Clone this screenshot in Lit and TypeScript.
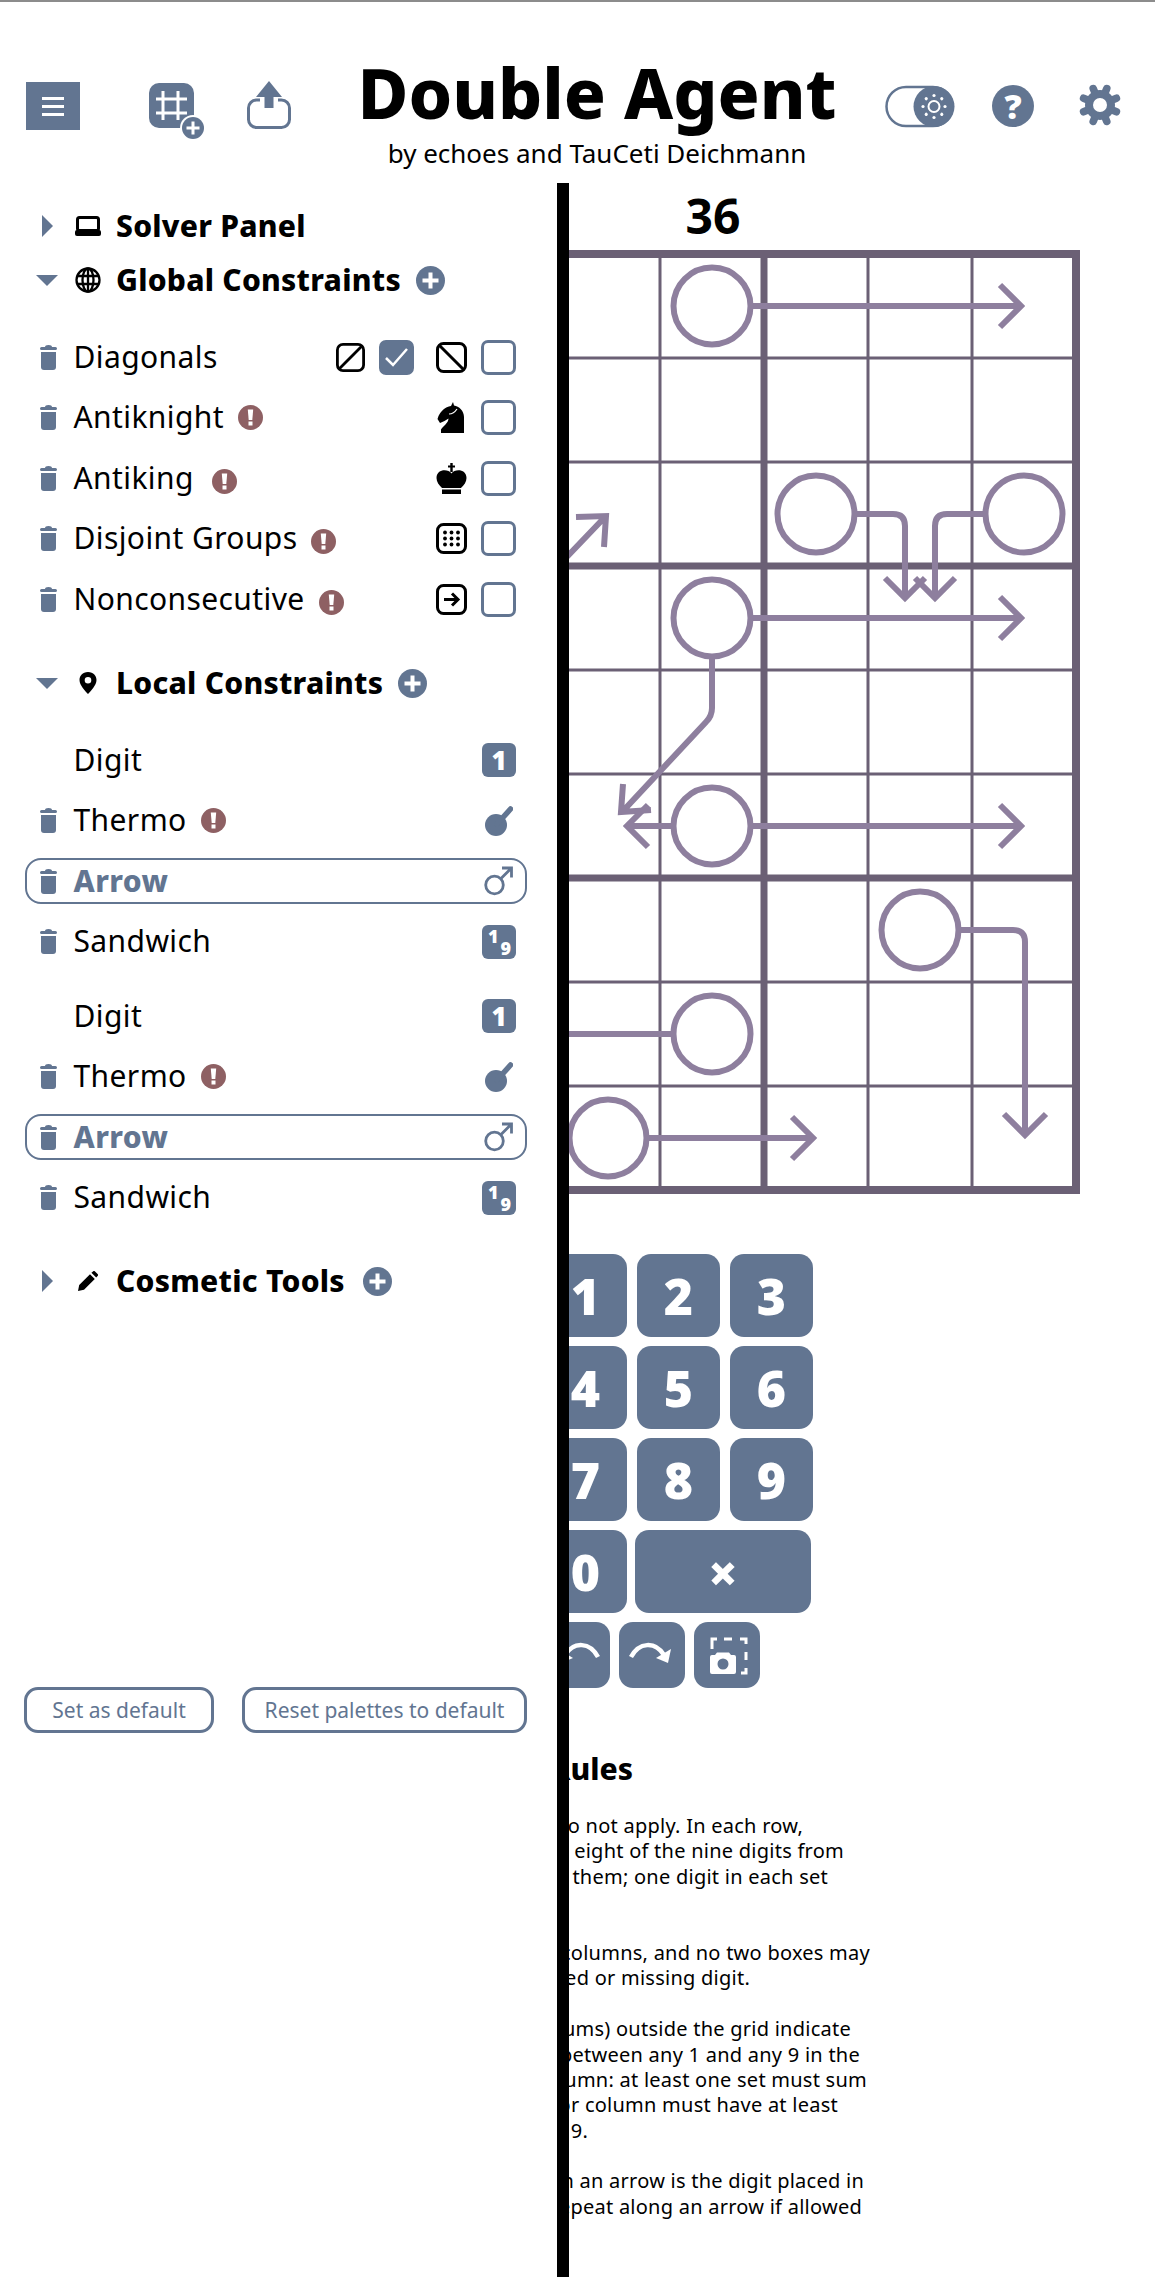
import { LitElement, html, css, svg } from 'lit';
import { customElement } from 'lit/decorators.js';

const BLUE = '#627591';
const INK = '#6b6075';
const ARROW = '#8e7f9e';

const cellX = (c: number) => 192 + 104 * c;
const cellY = (r: number) => 306 + 104 * r;

// circles and arrow shafts, in page coordinates
const circles = [
  [5, 0], [6, 2], [8, 2], [5, 3], [5, 5], [7, 6], [5, 7], [4, 8],
];
const shafts = [
  'M750 306H1021 M1000 285L1021 306L1000 327',
  'M854 514H893Q905 514 905 526V598 M885 578L905 598L925 578',
  'M986 514H947Q935 514 935 526V598 M915 578L935 598L955 578',
  'M750 618H1021 M1000 597L1021 618L1000 639',
  'M712 656V708Q712 716 706 722L623 811 M623 784L621 812L651 810',
  'M674 826H628 M648 805L627 826L648 847',
  'M750 826H1021 M1000 805L1021 826L1000 847',
  'M958 930H1013Q1025 930 1025 942V1135 M1004 1114L1025 1135L1046 1114',
  'M500 1034H674',
  'M646 1138H813 M792 1117L813 1138L792 1159',
  'M540 585L605 517 M576 517L606 516L604 547',
];

const trash = html`<svg class="trash" width="19" height="25" viewBox="0 0 19 25">
  <path d="M1 3.5a1.5 1.5 0 0 1 1.5-1.5H6a3.500 2 0 0 1 7 0h3.500a1.500 1.500 0 0 1 0 3h-14A1.500 1.500 0 0 1 1 3.500Z" fill=${BLUE} />
  <path d="M2 7h15v15a3 3 0 0 1-3 3H5a3 3 0 0 1-3-3Z" fill=${BLUE} />
</svg>`;

const warn = (extra = '') => html`<span class="warn ${extra}">
  <svg width="25" height="25" viewBox="0 0 25 25">
    <circle cx="12.500" cy="12.500" r="12.500" fill="#8e6063" />
    <path d="M9.800 4.500h5.400l-.9 10.500h-3.600Z" fill="#fff" />
    <rect x="10.500" y="16.500" width="4" height="4" fill="#fff" />
  </svg>
</span>`;

const box = (inner: unknown, w = 31, h = 31) => html`<svg width=${w} height=${h} viewBox="0 0 31 31">
  <rect x="1.500" y="1.500" width="28" height="28" rx="6" fill="none" stroke="#000" stroke-width="3" />
  ${inner}
</svg>`;

const icons = {
  slash: box(svg`<path d="M3 28L28 3" stroke="#000" stroke-width="3" />`, 29, 29),
  backslash: box(svg`<path d="M3 3L28 28" stroke="#000" stroke-width="3" />`),
  dots: box(svg`<g fill="#000">
    ${[9.500, 15.500, 21.500].flatMap((y) =>
      [9, 15.500, 22].map((x) => svg`<circle cx=${x} cy=${y} r="1.900" />`))}
  </g>`),
  next: box(svg`<path d="M8 15.500H22 M16 9.500L22 15.500L16 21.500" fill="none" stroke="#000" stroke-width="3" />`),
  knight: html`<svg width="31" height="31" viewBox="0 0 31 31">
    <path d="M17 0L15 4C9 5 5 9 2.500 14L1.500 17L4 21L8.500 19L12.500 16.500C12.500 21 7 24 5 27.500V31H28V15C28 9 23 4 18 3.500Z" fill="#000" />
    <path d="M13 12C17 12 19 10 21 7" fill="none" stroke="#fff" stroke-width="1.200" />
  </svg>`,
  king: html`<svg width="31" height="31" viewBox="0 0 31 31">
    <path d="M14.300 0h2.400v2.400h2.300v2.200h-2.300V9h-2.400V4.600h-2.300V2.400h2.300Z" fill="#000" />
    <path d="M15.500 10.500C12 5.500 .5 6 .5 15C.5 19 3 22 6 25H25C28 22 30.500 19 30.500 15C30.500 6 19 5.500 15.500 10.500Z" fill="#000" />
    <rect x="6" y="26.500" width="19" height="4.500" fill="#000" />
  </svg>`,
  thermo: html`<svg width="28" height="30" viewBox="0 0 28 30">
    <circle cx="11" cy="19" r="11" fill=${BLUE} />
    <path d="M12 18L25.500 3" stroke=${BLUE} stroke-width="5.500" stroke-linecap="round" />
  </svg>`,
  male: html`<svg width="29" height="30" viewBox="0 0 29 30">
    <circle cx="10.500" cy="19" r="8.800" fill="none" stroke=${BLUE} stroke-width="2.800" />
    <path d="M16.500 13L27 2.500 M18 2H27.500V11.500" fill="none" stroke=${BLUE} stroke-width="2.800" />
  </svg>`,
};

const laptop = html`<svg width="26" height="20" viewBox="0 0 26 20">
  <rect x="2.500" y="1.500" width="21" height="13" rx="2" fill="none" stroke="#000" stroke-width="3" />
  <rect x="0" y="14" width="26" height="6" rx="2" fill="#000" />
</svg>`;
const globe = html`<svg width="26" height="26" viewBox="0 0 26 26">
  <g fill="none" stroke="#000" stroke-width="2.300">
    <circle cx="13" cy="13" r="11.500" />
    <ellipse cx="13" cy="13" rx="5.500" ry="11.500" />
    <path d="M13 1.500V24.500 M2.500 9H23.500 M2.500 17H23.500" />
  </g>
</svg>`;
const pin = html`<svg width="20" height="22" viewBox="0 0 20 22">
  <path d="M10 0C4.500 0 1.500 4 1.500 8C1.500 13 7 19 10 22C13 19 18.500 13 18.500 8C18.500 4 15.500 0 10 0Z M10 5a3.300 3.300 0 1 1 0 6.600a3.300 3.300 0 0 1 0-6.600Z" fill="#000" fill-rule="evenodd" />
</svg>`;
const pencil = html`<svg width="20" height="20" viewBox="0 0 20 20">
  <path d="M0 20L1.200 14L12 3.200L16.800 8L6 18.800Z M13.400 1.800L15 .4a1.400 1.400 0 0 1 2 0L19.600 3a1.400 1.400 0 0 1 0 2L18.200 6.600Z" fill="#000" />
</svg>`;

const plus = html`<svg class="plus" width="29" height="29" viewBox="0 0 29 29">
  <circle cx="14.500" cy="14.500" r="14.500" fill=${BLUE} />
  <path d="M14.500 6.500V22.500 M6.500 14.500H22.500" stroke="#fff" stroke-width="4" />
</svg>`;

const triRight = html`<svg width="11" height="22" viewBox="0 0 11 22"><path d="M0 0L11 11L0 22Z" fill=${BLUE} /></svg>`;
const triDown = html`<svg width="22" height="11" viewBox="0 0 22 11"><path d="M0 0H22L11 11Z" fill=${BLUE} /></svg>`;

const gear = html`<svg width="44" height="44" viewBox="0 0 44 44">
  ${[0, 45, 90, 135, 180, 225, 270, 315].map((a) => svg`<path d="M22 22V4.200" transform="rotate(${a + 22.500} 22 22)" stroke=${BLUE} stroke-width="7.500" stroke-linecap="round" />`)}
  <circle cx="22" cy="22" r="11" fill="none" stroke=${BLUE} stroke-width="8" />
  <circle cx="22" cy="22" r="7" fill="#fff" />
</svg>`;

const sunRays = [0, 45, 90, 135, 180, 225, 270, 315];

type Row = {
  name: string;
  trash?: boolean;
  warn?: string;
  active?: boolean;
  right: unknown;
};

const checkbox = (on = false) => html`<span class="check ${on ? 'on' : ''}">
  ${on ? html`<svg width="25" height="22" viewBox="0 0 25 22"><path d="M2 12L9 19L23 3" fill="none" stroke="#fff" stroke-width="2.500" /></svg>` : ''}
</span>`;

const globals: Row[] = [
  { name: 'Diagonals', trash: true, right: html`${icons.slash}<span class="gap14"></span>${checkbox(true)}<span class="gap22"></span>${icons.backslash}<span class="gap14"></span>${checkbox()}` },
  { name: 'Antiknight', trash: true, warn: 'plain', right: html`${icons.knight}<span class="gap14"></span>${checkbox()}` },
  { name: 'Antiking', trash: true, warn: 'low far', right: html`${icons.king}<span class="gap14"></span>${checkbox()}` },
  { name: 'Disjoint Groups', trash: true, warn: 'low', right: html`${icons.dots}<span class="gap14"></span>${checkbox()}` },
  { name: 'Nonconsecutive', trash: true, warn: 'low', right: html`${icons.next}<span class="gap14"></span>${checkbox()}` },
];

const locals: Row[] = [
  { name: 'Digit', right: html`<span class="tile">1</span>` },
  { name: 'Thermo', trash: true, warn: 'plain', right: html`<span class="slot">${icons.thermo}</span>` },
  { name: 'Arrow', trash: true, active: true, right: html`<span class="slot">${icons.male}</span>` },
  { name: 'Sandwich', trash: true, right: html`<span class="tile split"><i>1</i><b>9</b></span>` },
];

// [right edge of the line in page px, text]; the start of each line sits under the side panel
const rules: [number, string][] = [
  [803, 'Normal sudoku rules do not apply. In each row,'],
  [844, 'column and box, place eight of the nine digits from'],
  [828, '1 to 9 with no repeats among them; one digit in each set'],
  [420, 'is left out.'],
  [0, ''],
  [870, 'Rows may not match columns, and no two boxes may'],
  [750, 'share a repeated or missing digit.'],
  [0, ''],
  [851, 'Clues (sandwich sums) outside the grid indicate'],
  [860, 'the sum of digits between any 1 and any 9 in the'],
  [867, 'given row or column: at least one set must sum'],
  [838, 'to it, and that row or column must have at least'],
  [588, 'one 1 and one 9.'],
  [0, ''],
  [864, 'A circled digit on an arrow is the digit placed in'],
  [862, 'its cells. Digits may repeat along an arrow if allowed'],
];

@customElement('app-root')
export class AppRoot extends LitElement {
  static styles = css`
    :host {
      --blue: #627591;
      display: block;
      position: relative;
      width: 1155px;
      height: 2277px;
      overflow: hidden;
      background: #fff;
      color: #000;
      font-family: 'Noto Sans', 'Lato', sans-serif;
    }
    .topline { height: 2px; background: #8c8c8c; }

    header {
      display: flex;
      align-items: flex-start;
      height: 181px;
      padding: 79px 0 0 26px;
      box-sizing: border-box;
    }
    .menu {
      width: 54px;
      height: 48px;
      background: var(--blue);
      display: flex;
      flex-direction: column;
      align-items: center;
      justify-content: center;
      gap: 5px;
      margin-top: 1px;
    }
    .menu span { width: 22px; height: 3px; background: #fff; }
    .grid-add { margin-left: 69px; margin-top: 2px; }
    .share { margin-left: 42px; }
    .brand { width: 514px; margin-left: 49px; text-align: center; margin-top: -29px; }
    .brand h1 {
      margin: 0;
      font-size: 69.5px;
      line-height: 80px;
      font-weight: 800;
      white-space: nowrap;
    }
    .brand p {
      margin: 5px 0 0;
      font-size: 26px;
      line-height: 32px;
      white-space: nowrap;
    }
    .toggle { margin-left: 31px; margin-top: 4px; }
    .help {
      margin-left: 37px;
      margin-top: 4px;
      width: 42px;
      height: 42px;
      border-radius: 50%;
      background: var(--blue);
      color: #fff;
      font-size: 34px;
      font-weight: 900;
      line-height: 42px;
      text-align: center;
    }
    .cog { margin-left: 44px; margin-top: 2px; }

    .clue {
      width: 104px;
      margin-left: 661px;
      height: 67px;
      text-align: center;
      font-size: 48px;
      line-height: 66px;
      font-weight: 700;
    }
    .board { display: block; margin-left: 136px; }

    .pad {
      margin: 60px 0 0 544px;
      display: flex;
      flex-direction: column;
      gap: 9px;
    }
    .pad-row { display: flex; gap: 10px; }
    .key {
      width: 83px;
      height: 83px;
      border-radius: 14px;
      background: var(--blue);
      color: #fff;
      font-size: 50px;
      font-weight: 900;
      display: flex;
      align-items: center;
      justify-content: center;
    }
    .key.wide { width: 176px; margin-left: -2px; font-size: 52px; }
    .pad-row.tools { gap: 9px; }
    .key.tool { width: 66px; height: 66px; }

    .rules { margin-top: 61px; }
    .rules h2 {
      margin: 0 0 24px;
      width: 633px;
      text-align: right;
      font-size: 30px;
      line-height: 40px;
      font-weight: 800;
    }
    .line {
      height: 25.4px;
      line-height: 25.4px;
      font-size: 20px;
      letter-spacing: 0.25px;
      text-align: right;
      white-space: nowrap;
    }

    aside {
      position: absolute;
      top: 183px;
      left: 0;
      width: 557px;
      height: 2094px;
      background: #fff;
      border-right: 12px solid #000;
      padding-top: 16px;
    }
    .hdr {
      display: flex;
      align-items: center;
      height: 54px;
    }
    .tri { width: 30px; margin-left: 32px; display: flex; justify-content: center; }
    .ico { width: 26px; margin-left: 13px; margin-right: 15px; display: flex; justify-content: center; }
    .hdr h3 {
      margin: 0 0 2px;
      font-size: 30px;
      font-weight: 800;
      letter-spacing: 0.25px;
      white-space: nowrap;
    }
    .plus { margin-left: 15px; }
    .hdr.cosmetic .plus { margin-left: 18px; }
    .rows { display: flex; flex-direction: column; gap: 14.5px; margin: 0 0 0 25px; width: 502px; }
    .rows.first { margin-top: 27px; }
    .rows.second { margin-top: 28.5px; }
    .hdr.local { margin-top: 34px; }
    .hdr.cosmetic { margin-top: 33.5px; }
    .row {
      display: flex;
      align-items: center;
      height: 46px;
      box-sizing: border-box;
      border: 2px solid transparent;
      border-radius: 16px;
      padding: 0 9px 0 12px;
    }
    .row.active { border-color: var(--blue); color: var(--blue); }
    .row.active .name { font-weight: 800; }
    .trash-slot { width: 19px; margin-right: 15.5px; display: flex; }
    .name { font-size: 30px; letter-spacing: 0.4px; white-space: nowrap; margin-bottom: 2px; }
    .warn { display: flex; margin-left: 14px; }
    .warn.low { margin-top: 6px; }
    .warn.far { margin-left: 18px; }
    .opts { margin-left: auto; display: flex; align-items: center; }
    .gap14 { width: 14px; }
    .gap22 { width: 22px; }
    .check {
      width: 35px;
      height: 35px;
      box-sizing: border-box;
      border: 3px solid var(--blue);
      border-radius: 7px;
      display: flex;
      align-items: center;
      justify-content: center;
    }
    .check.on { background: var(--blue); }
    .tile {
      position: relative;
      width: 34px;
      height: 34px;
      border-radius: 6px;
      background: var(--blue);
      color: #fff;
      font-size: 26px;
      font-weight: 900;
      line-height: 34px;
      text-align: center;
    }
    .tile.split i, .tile.split b {
      position: absolute;
      font-style: normal;
      font-size: 18px;
      line-height: 18px;
      font-weight: 900;
    }
    .tile.split i { left: 6px; top: 2px; }
    .tile.split b { right: 5px; bottom: 2px; }
    .slot { display: flex; margin-right: 3px; }

    .actions {
      display: flex;
      gap: 28px;
      margin: 379px 0 0 24px;
    }
    .actions button {
      height: 46px;
      box-sizing: border-box;
      border: 3px solid var(--blue);
      border-radius: 14px;
      background: #fff;
      color: var(--blue);
      font: inherit;
      font-size: 21px;
      padding: 0;
    }
    .actions .set { width: 190px; }
    .actions .reset { width: 285px; }
  `;

  private renderRow(r: Row) {
    return html`<div class="row ${r.active ? 'active' : ''}">
      <span class="trash-slot">${r.trash ? trash : ''}</span>
      <span class="name">${r.name}</span>
      ${r.warn ? warn(r.warn) : ''}
      <span class="opts">${r.right}</span>
    </div>`;
  }

  private renderBoard() {
    const thin = [660, 868, 972, 556, 348, 244].map((x) => svg`<path d="M${x} 254V1190" stroke=${INK} stroke-width="3" />`);
    const thinH = [358, 462, 670, 774, 982, 1086].map((y) => svg`<path d="M140 ${y}H1076" stroke=${INK} stroke-width="3" />`);
    const thick = [452, 764].map((x) => svg`<path d="M${x} 254V1190" stroke=${INK} stroke-width="7" />`);
    const thickH = [566, 878].map((y) => svg`<path d="M140 ${y}H1076" stroke=${INK} stroke-width="7" />`);
    return html`<svg class="board" width="944" height="944" viewBox="136 250 944 944">
      ${thin}${thinH}${thick}${thickH}
      <rect x="140" y="254" width="936" height="936" fill="none" stroke=${INK} stroke-width="8" />
      <g fill="none" stroke=${ARROW} stroke-width="6" stroke-linejoin="miter">
        ${shafts.map((d) => svg`<path d=${d} />`)}
        ${circles.map(([c, r]) => svg`<circle cx=${cellX(c)} cy=${cellY(r)} r="38.500" />`)}
      </g>
    </svg>`;
  }

  render() {
    return html`
      <div class="topline"></div>
      <header>
        <div class="menu"><span></span><span></span><span></span></div>
        <svg class="grid-add" width="56" height="57" viewBox="0 0 56 57">
          <rect x="0" y="0" width="45" height="45" rx="10" fill=${BLUE} />
          <path d="M14 8V37 M29 8V37 M7 16H38 M7 30H38" stroke="#fff" stroke-width="3" />
          <circle cx="44" cy="45" r="13" fill="#fff" />
          <circle cx="44" cy="45" r="11" fill=${BLUE} />
          <path d="M44 38.500V51.500 M37.500 45H50.500" stroke="#fff" stroke-width="3" />
        </svg>
        <svg class="share" width="44" height="48" viewBox="0 0 44 48">
          <rect x="1.500" y="19" width="41" height="27.500" rx="8" fill="none" stroke=${BLUE} stroke-width="3" />
          <rect x="13" y="6" width="18" height="22" fill="#fff" />
          <path d="M22 0L35 16H26.500V27H17.500V16H9Z" fill=${BLUE} />
        </svg>
        <div class="brand">
          <h1>Double Agent</h1>
          <p>by echoes and TauCeti Deichmann</p>
        </div>
        <svg class="toggle" width="70" height="44" viewBox="0 0 70 44">
          <rect x="1.500" y="2" width="66" height="39" rx="19.500" fill="none" stroke=${BLUE} stroke-width="2.500" />
          <circle cx="49" cy="21.500" r="20.500" fill=${BLUE} />
          <circle cx="49" cy="21.500" r="5.500" fill="none" stroke="#fff" stroke-width="2" />
          ${sunRays.map((a) => svg`<circle cx="49" cy="10.500" r="1.600" fill="#fff" transform="rotate(${a} 49 21.500)" />`)}
        </svg>
        <div class="help">?</div>
        <span class="cog">${gear}</span>
      </header>

      <div class="clue">36</div>
      ${this.renderBoard()}

      <div class="pad">
        ${[['1', '2', '3'], ['4', '5', '6'], ['7', '8', '9']].map((row) => html`<div class="pad-row">
          ${row.map((k) => html`<div class="key">${k}</div>`)}
        </div>`)}
        <div class="pad-row"><div class="key">0</div><div class="key wide">×</div></div>
        <div class="pad-row tools">
          <div class="key tool">
            <svg width="66" height="66" viewBox="0 0 66 66"><path d="M54 35C46 20 30 19 21 33" fill="none" stroke="#fff" stroke-width="4.500" /><path d="M14 27L17 41L29 36Z" fill="#fff" /></svg>
          </div>
          <div class="key tool">
            <svg width="66" height="66" viewBox="0 0 66 66"><path d="M12 35C20 20 36 19 45 33" fill="none" stroke="#fff" stroke-width="4.500" /><path d="M52 27L49 41L37 36Z" fill="#fff" /></svg>
          </div>
          <div class="key tool">
            <svg width="66" height="66" viewBox="0 0 66 66">
              <path d="M18 27V17H23 M30 17H38 M46 17H52V22 M52 30V38 M47 51H52V46" fill="none" stroke="#fff" stroke-width="3" />
              <path d="M16 35a2 2 0 0 1 2-2H21L23 30.500H35L37 33H40a2 2 0 0 1 2 2V50a2 2 0 0 1-2 2H18a2 2 0 0 1-2-2Z M29 36.500a5.500 5.500 0 1 0 0 11a5.500 5.500 0 0 0 0-11Z" fill="#fff" fill-rule="evenodd" />
            </svg>
          </div>
        </div>
      </div>

      <section class="rules">
        <h2>Rules</h2>
        ${rules.map(([right, text]) => html`<div class="line" style="width:${right}px">${text}</div>`)}
      </section>

      <aside>
        <div class="hdr">
          <span class="tri">${triRight}</span><span class="ico">${laptop}</span>
          <h3>Solver Panel</h3>
        </div>
        <div class="hdr">
          <span class="tri">${triDown}</span><span class="ico">${globe}</span>
          <h3>Global Constraints</h3>${plus}
        </div>
        <div class="rows first">${globals.map((r) => this.renderRow(r))}</div>

        <div class="hdr local">
          <span class="tri">${triDown}</span><span class="ico">${pin}</span>
          <h3>Local Constraints</h3>${plus}
        </div>
        <div class="rows first">${locals.map((r) => this.renderRow(r))}</div>
        <div class="rows second">${locals.map((r) => this.renderRow(r))}</div>

        <div class="hdr cosmetic">
          <span class="tri">${triRight}</span><span class="ico">${pencil}</span>
          <h3>Cosmetic Tools</h3>${plus}
        </div>
        <div class="actions">
          <button class="set">Set as default</button>
          <button class="reset">Reset palettes to default</button>
        </div>
      </aside>
    `;
  }
}
